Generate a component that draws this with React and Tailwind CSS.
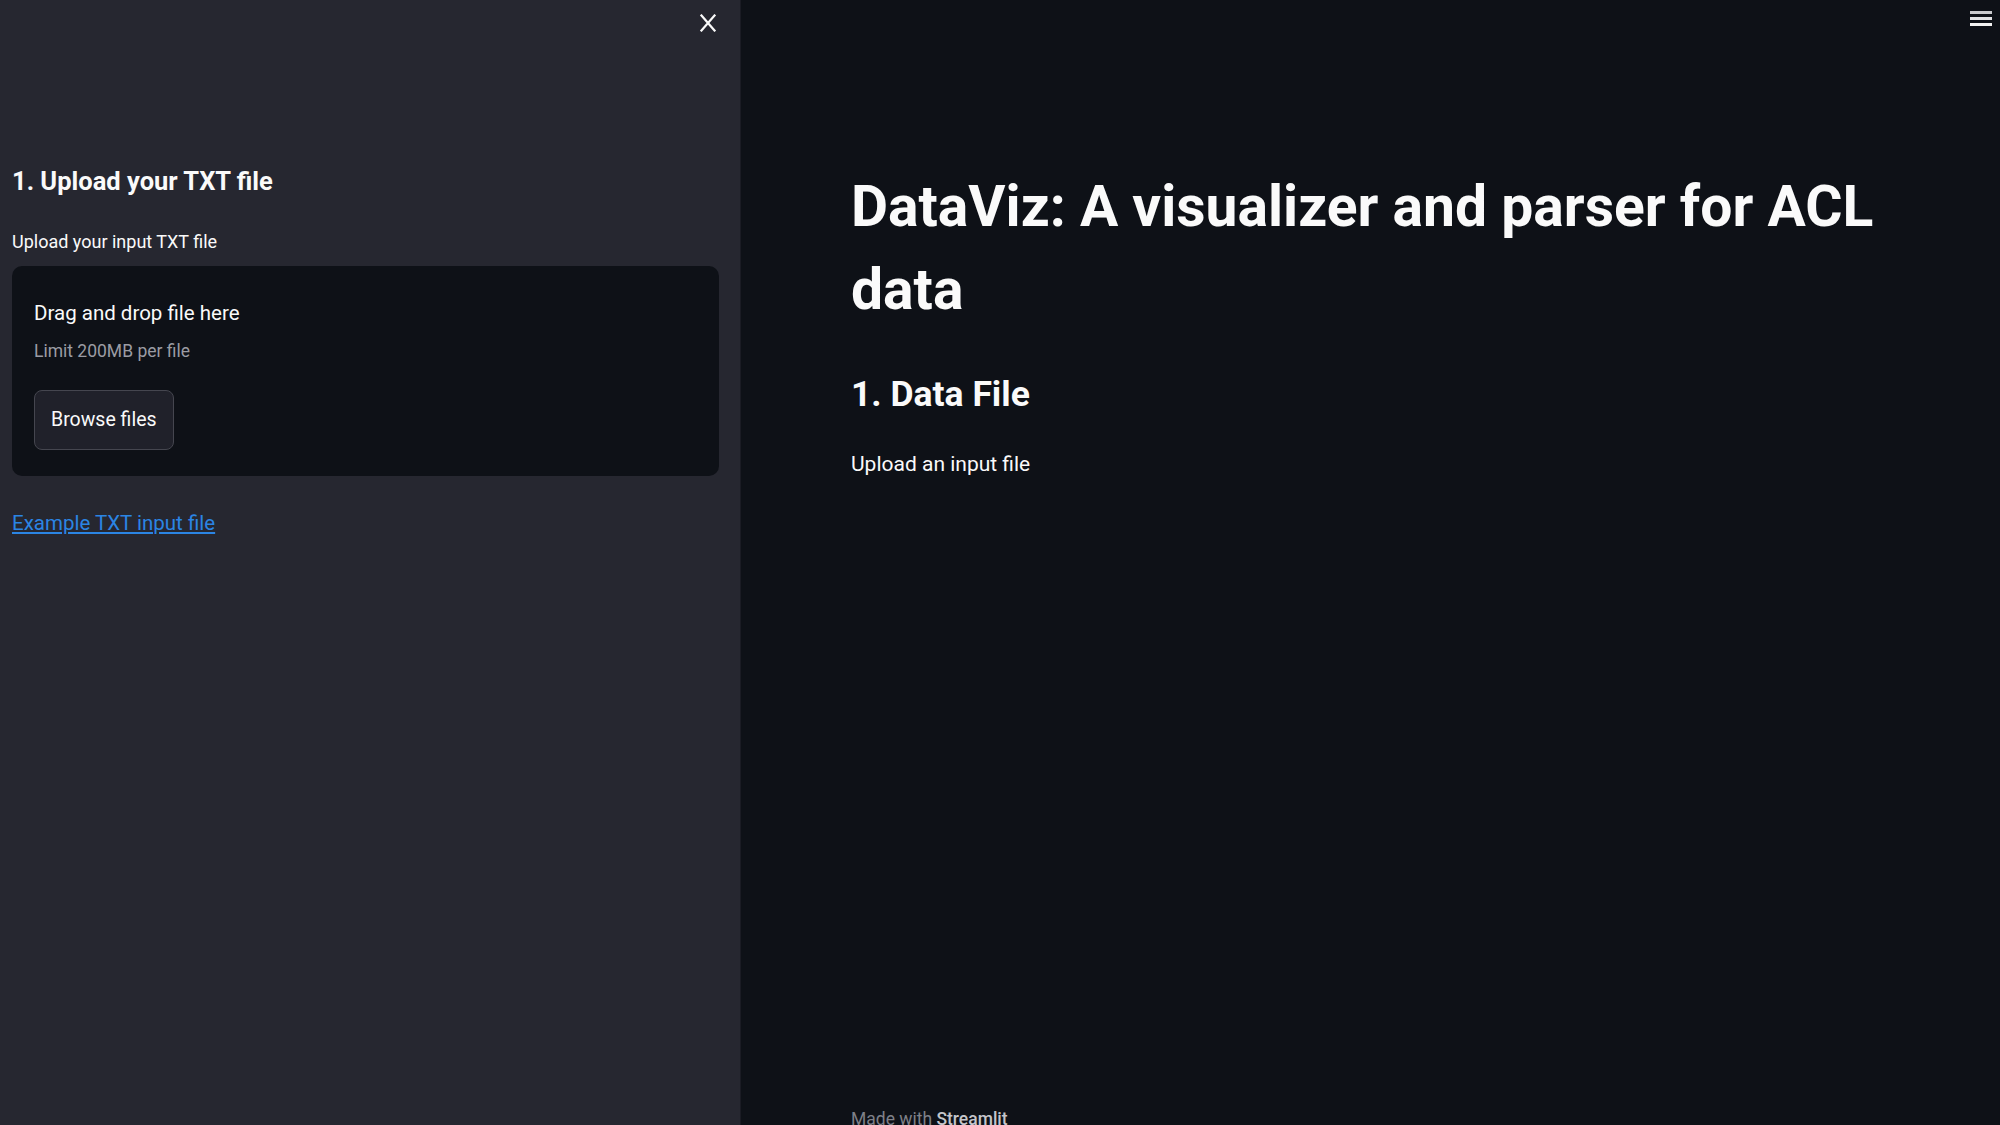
import React from 'react';

// Sidebar close button glyph
function CloseIcon() {
  return (
    <svg width="16" height="18" viewBox="0 0 16 18" fill="none">
      <path d="M1.5 1.5 14.5 16.5M14.5 1.5 1.5 16.5" stroke="#fafafa" strokeWidth="2.2" strokeLinecap="square" />
    </svg>
  );
}

export default function App() {
  return (
    <div className="flex h-[1125px] w-full overflow-hidden bg-[#0e1117] font-[Roboto,_sans-serif] text-[#fafafa]">
      {/* Sidebar */}
      <aside className="flex w-[741px] shrink-0 flex-col border-r border-[#1b1c24] bg-[#262730]">
        <div className="flex justify-end pt-[14px] pr-[24px]">
          <CloseIcon />
        </div>

        <div className="flex flex-col pl-[12px] pr-[21px]">
          <h2 className="mt-[134px] text-[25.5px] font-bold leading-[30px]">1. Upload your TXT file</h2>
          <label className="mt-[34px] text-[18px] leading-[24px]">Upload your input TXT file</label>

          {/* File drop zone */}
          <div className="mt-[12px] flex flex-col items-start rounded-[10px] bg-[#0e1117] pt-[33px] pb-[26px] pl-[22px]">
            <span className="text-[20.5px] leading-[28px]">Drag and drop file here</span>
            <span className="mt-[12px] text-[17.5px] leading-[24px] text-[#9b9ca4]">Limit 200MB per file</span>
            <button className="mt-[27px] h-[60px] rounded-[8px] border border-[#45464f] bg-[#20212a] px-[16px] text-[19.5px] leading-[24px] text-[#fafafa]">
              Browse files
            </button>
          </div>

          <a href="#" className="mt-[33px] self-start text-[20.5px] leading-[28px] text-[#2b85e4] underline decoration-[2px] underline-offset-[2px]">
            Example TXT input file
          </a>
        </div>
      </aside>

      {/* Main area */}
      <main className="relative flex flex-1 flex-col">
        <div className="absolute top-[11px] right-[8px] flex flex-col gap-[3px]">
          <span className="h-[3px] w-[22px] bg-[#c9c9cc]" />
          <span className="h-[3px] w-[22px] bg-[#e2e2e4]" />
          <span className="h-[3px] w-[22px] bg-[#f2f2f2]" />
        </div>

        <div className="flex flex-1 flex-col pl-[110px]">
          <div className="flex w-[1080px] flex-col">
            <h1 className="mt-[165px] text-[57px] font-bold leading-[83px]">DataViz: A visualizer and parser for ACL data</h1>
            <h2 className="mt-[41px] text-[35.5px] font-bold leading-[44px]">1. Data File</h2>
            <p className="mt-[34px] text-[21px] leading-[28px]">Upload an input file</p>
          </div>

          <footer className="mt-auto mb-[-6px] text-[17.5px] leading-[24px] text-[#7e8088]">
            Made with <span className="font-medium text-[#c4c5ca]">Streamlit</span>
          </footer>
        </div>
      </main>
    </div>
  );
}
